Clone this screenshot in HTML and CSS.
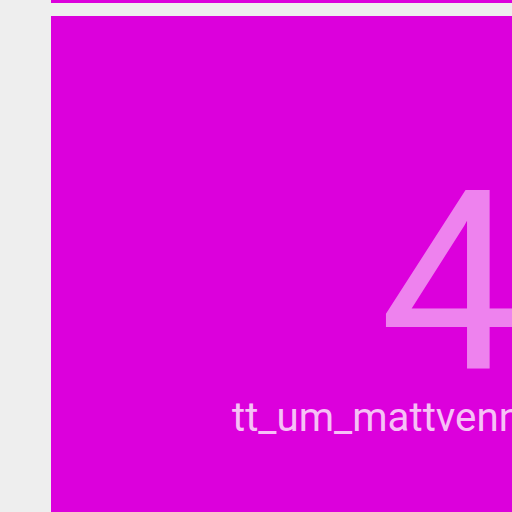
FILE: index.html
```html
<!DOCTYPE html>
<html>
<head>
<meta charset="utf-8">
<link rel="stylesheet" href="styles.css">
</head>
<body>
<div class="page">
  <div class="topbar"></div>
  <div class="panel">
    <div class="number">4</div>
    <div class="name">tt_um_mattvenn</div>
  </div>
</div>
</body>
</html>
```
FILE: styles.css
```css
html, body {
  margin: 0;
  padding: 0;
  width: 512px;
  height: 512px;
  overflow: hidden;
  background: #eeeeee;
  font-family: Roboto, "Noto Sans", sans-serif;
}
.page {
  padding-left: 51px;
  display: flex;
  flex-direction: column;
  gap: 13px;
}
.topbar {
  height: 3px;
  width: 520px;
  background: #dc00dc;
}
.panel {
  width: 469px;
  height: 600px;
  padding-top: 152px;
  background: #dc00dc;
  display: flex;
  flex-direction: column;
  align-items: flex-end;
}
.number {
  font-size: 250px;
  line-height: 230px;
  color: #ee82ee;
}
.name {
  font-size: 40.3px;
  line-height: 40px;
  color: #f6c0f6;
  white-space: nowrap;
  margin-right: -1px;
}
```
